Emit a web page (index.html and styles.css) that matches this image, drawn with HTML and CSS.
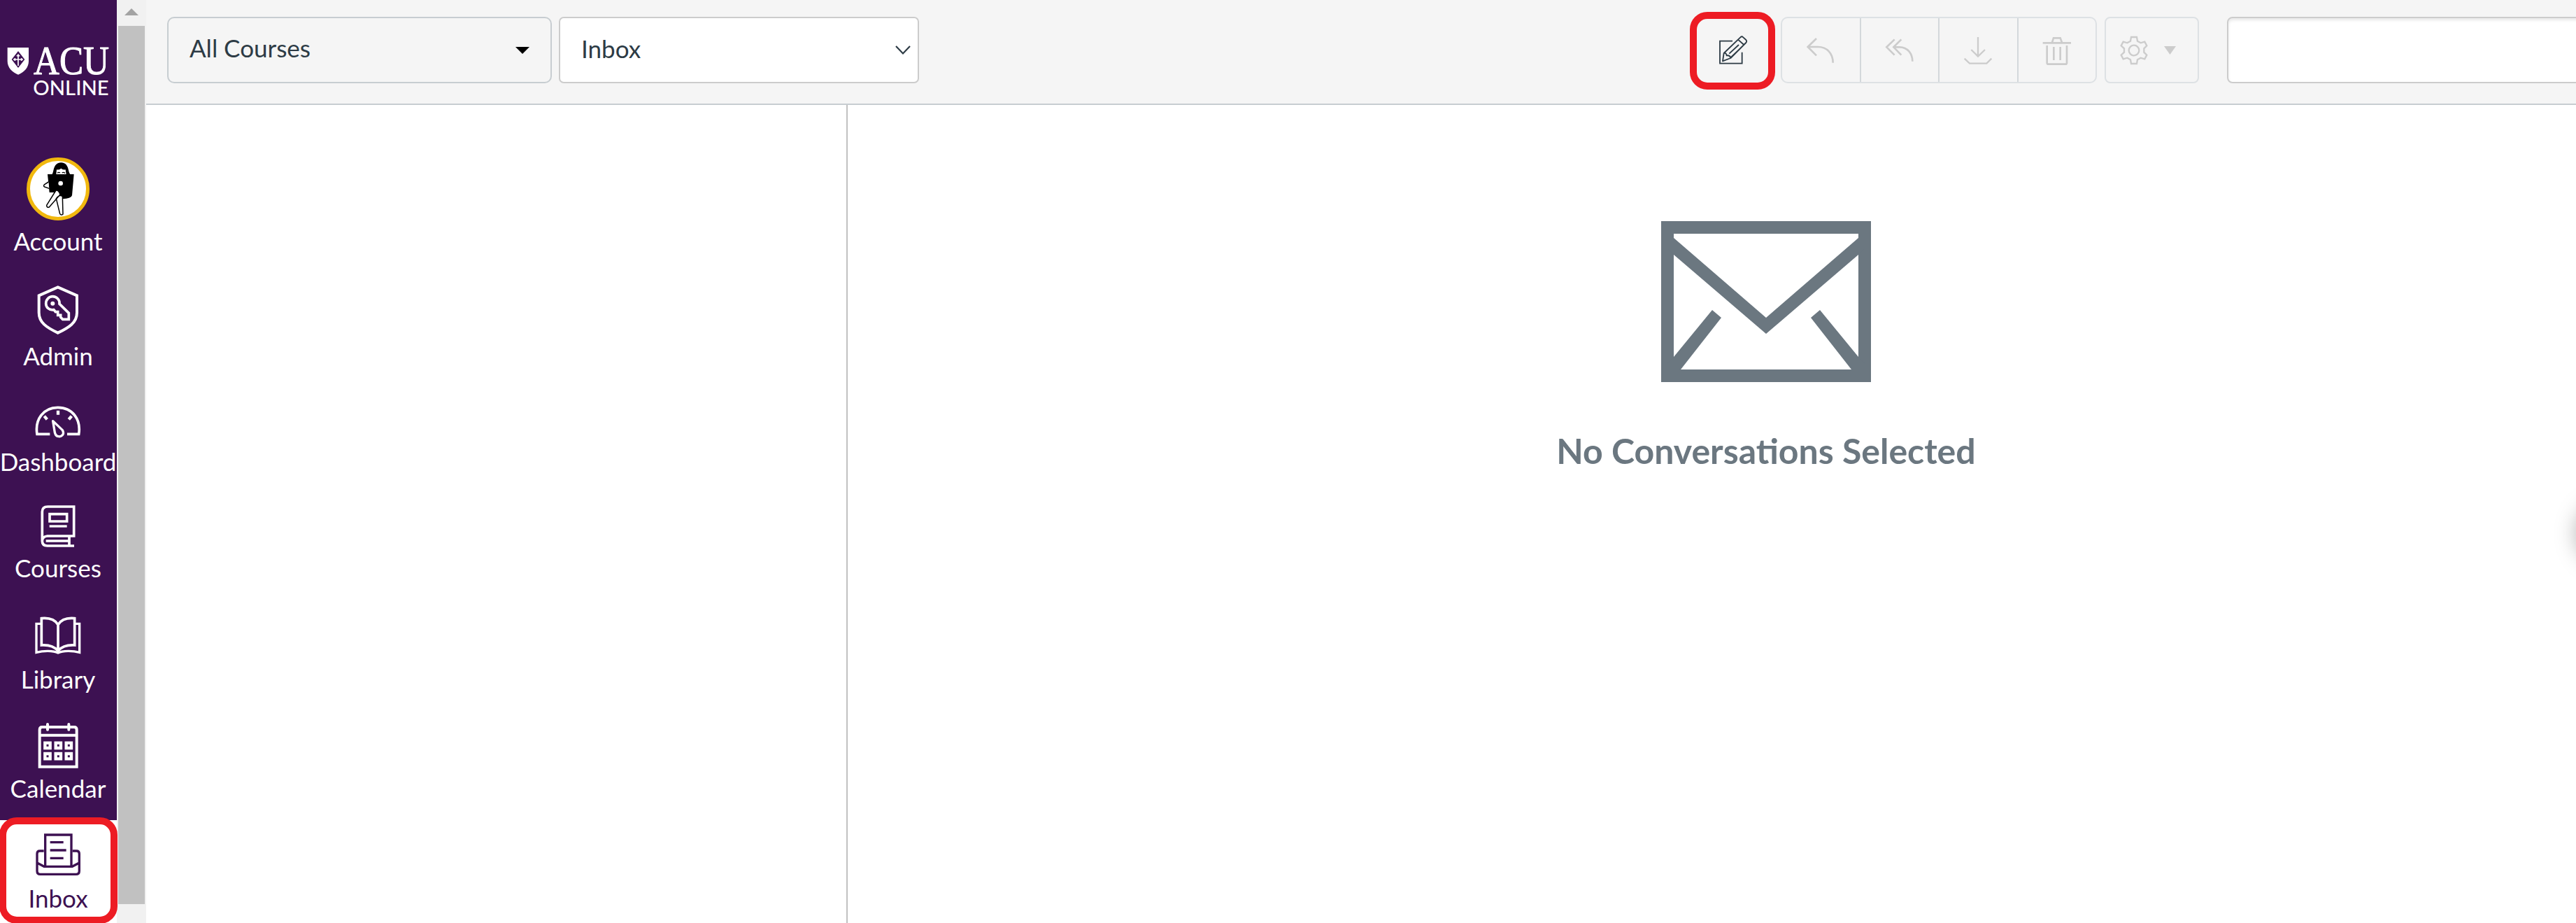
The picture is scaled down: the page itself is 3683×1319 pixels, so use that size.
FILE: index.html
```html
<!DOCTYPE html>
<html lang="en">
<head>
<meta charset="utf-8">
<title>Inbox</title>
<link rel="stylesheet" href="styles.css">
</head>
<body>
<div class="app">
  <nav class="sidebar">
    <div class="logo">
      <svg width="167" height="160" viewBox="0 0 501 480">
        <path fill="#fff" d="M32 204H123V262C123 290 103 311 78 320C52 311 32 290 32 262Z"/>
        <path fill="#3d1152" d="M78 219L106 255L78 291L50 255Z"/>
        <path stroke="#fff" stroke-width="5" fill="none" d="M78 232V282M57 255H99"/>
        <path stroke="#fff" stroke-width="5" fill="none" d="M71 239H85M64 249V261M92 249V261"/>
        <text class="logo-name" x="144" y="317" textLength="324" lengthAdjust="spacingAndGlyphs">ACU</text>
        <text class="logo-sub" x="142" y="409" textLength="325" lengthAdjust="spacingAndGlyphs">ONLINE</text>
      </svg>
    </div>
    <a class="item account">
      <svg width="90" height="90" viewBox="114 675 270 270">
        <circle cx="249" cy="810" r="127.500" fill="#fff" stroke="#f1b80e" stroke-width="15"/>
        <path d="M223 748C232 740 226 698 262 697C298 698 290 738 302 748Z"/>
        <path fill="#fff" d="M241 748L243 727Q252 730 262 722Q272 730 281 727L284 748Z"/>
        <path fill="none" stroke="#000" stroke-width="4" d="M246 742Q252 737 258 741M266 741Q272 737 279 742"/>
        <path d="M204 747H317L309 838Q305 851 268 853L245 825H212Z"/>
        <circle cx="260" cy="786" r="10" fill="#fff"/>
        <path fill="#fff" stroke="#000" stroke-width="4.500" stroke-linejoin="round" d="M208 780L191 791Q184 797 191 801L211 808M240 816L200 880Q200 891 211 888L258 834Q252 814 240 816ZM241 851L257 917Q263 925 270 918L268 842Q255 832 241 851Z"/>
      </svg>
      <span>Account</span>
    </a>
    <a class="item admin">
      <svg width="60" height="70" viewBox="161 84 180 210" fill="none" stroke="#fff" stroke-width="12">
        <path d="M250 91L332 127V200C332 243 298 264 250 287C202 264 169 243 169 200V127Z"/>
        <path stroke-width="11" d="M257 163C259 146 246 131 228 131C211 131 199 145 199 161C199 178 213 191 233 188L240 197H250V211H262V220L271 229H297V202Z"/>
        <circle cx="228" cy="161" r="9" fill="#fff" stroke="none"/>
      </svg>
      <span>Admin</span>
    </a>
    <a class="item dashboard">
      <svg width="66" height="46" viewBox="152 598 198 138" fill="none" stroke="#fff" stroke-width="11">
        <path d="M216 719H161C151 657 187 605 250 605C314 605 350 657 340 719H290"/>
        <path d="M229 663L270 702C281 722 263 731 254 729C243 729 239 720 237 712Z" stroke-linejoin="round" stroke-width="10"/>
        <path stroke-width="13" d="M251 618V636M192 642L204 656M309 642L297 656"/>
      </svg>
      <span>Dashboard</span>
    </a>
    <a class="item courses">
      <svg width="50" height="60" viewBox="175 96 150 180" fill="none" stroke="#fff" stroke-width="11">
        <path d="M182 250V124Q182 102 206 102H318V228H204Q182 230 182 250Q182 270 204 270H319M298 228V270M198 249H298"/>
        <path d="M214 134H288V165H214Z"/>
        <path stroke-width="10" d="M213 186H288"/>
      </svg>
      <span>Courses</span>
    </a>
    <a class="item library">
      <svg width="66" height="54" viewBox="152 571 198 162" fill="none" stroke="#fff" stroke-width="11">
        <path d="M251 606C236 582 210 576 180 579V694C210 692 235 700 251 718C267 700 292 692 322 694V579C292 576 266 582 251 606V718"/>
        <path stroke-width="10" d="M180 602H158V725C190 717 230 717 251 727C272 717 312 717 343 725V602H322"/>
      </svg>
      <span>Library</span>
    </a>
    <a class="item calendar">
      <svg width="58" height="65" viewBox="163 99 174 195" fill="none" stroke="#fff" stroke-width="12">
        <path d="M171 287V128Q171 117 182 117H319Q330 117 330 128V287ZM171 152H330"/>
        <path stroke-linecap="round" d="M205 105V128M296 105V128"/>
        <path stroke-width="13" d="M194 185H216V207H194ZM240 185H262V207H240ZM285 185H307V207H285ZM194 231H216V253H194ZM240 231H262V253H240ZM285 231H307V253H285Z"/>
      </svg>
      <span>Calendar</span>
    </a>
    <a class="item inbox">
      <svg width="64" height="61" viewBox="154 573 192 183" fill="none" stroke="#3d1152" stroke-width="10">
        <path d="M189 648H172Q160 648 160 660V734Q160 748 174 748H327Q341 748 341 734V660Q341 648 329 648H312M160 699L190 715H311L341 699"/>
        <path d="M195 715V579H307V715"/>
        <path d="M216 611H273M216 645H285M216 679H273"/>
      </svg>
      <span>Inbox</span>
      <i class="ring ring-inbox"></i>
    </a>
  </nav>
  <div class="scrollbar">
    <svg width="20" height="10" viewBox="0 0 20 10"><path d="M0 10L10 0L20 10Z" fill="#a3a3a3"/></svg>
    <div class="thumb"></div>
  </div>
  <main class="main">
    <header class="toolbar">
      <div class="picker all-courses"><span>All Courses</span>
        <svg width="20" height="10" viewBox="0 0 20 10"><path d="M0 0H20L10 10Z"/></svg>
      </div>
      <div class="picker mailbox"><span>Inbox</span>
        <svg width="22" height="14" viewBox="0 0 22 14"><path d="M1 1L11 11.500L21 1" fill="none" stroke="#2d3b45" stroke-width="2.200"/></svg>
      </div>
      <div class="compose">
        <svg width="42" height="42" viewBox="202 151 126 126" fill="none" stroke="#2d3b45" stroke-width="5.500">
          <path d="M262 174H208V270H303V222"/>
          <path d="M220 260L225 226L296 158Q302 152 308 158L320 169Q325 175 320 181L254 247ZM225 226Q236 224 237 236Q252 234 254 247M286 168L311 190M248 228L289 190M252 247L301 200" stroke-linejoin="round"/>
        </svg>
        <i class="ring ring-compose"></i>
      </div>
      <div class="group">
        <div class="action">
          <svg width="42" height="38" viewBox="578 160 126 114" fill="none" stroke="#ccc" stroke-width="8">
            <path d="M623 166L586 202L623 239M586 202H630C668 202 694 230 694 270"/>
          </svg>
        </div>
        <div class="action">
          <svg width="42" height="34" viewBox="916 169 126 102" fill="none" stroke="#ccc" stroke-width="8">
            <path d="M957 173L923 206L957 240M986 173L953 206L986 240M953 206H979C1013 206 1034 234 1034 267"/>
          </svg>
        </div>
        <div class="action">
          <svg class="low" width="42" height="42" viewBox="52 157 126 126" fill="none" stroke="#ccc" stroke-width="7">
            <path d="M115 160V244M86 214L115 243L145 214M57 252L79 273H152L173 252"/>
          </svg>
        </div>
        <div class="action">
          <svg class="low" width="42" height="42" viewBox="390 156 126 126" fill="none" stroke="#ccc" stroke-width="8">
            <path d="M392 184H513M432 182L438 163H467L474 182M410 195V269Q410 275 416 275H489Q495 275 495 269V195M439 201V258M467 201V258"/>
          </svg>
        </div>
      </div>
      <div class="settings">
        <svg width="42" height="42" viewBox="719 150 126 126" fill="none" stroke="#ccc" stroke-width="7">
          <path d="M770 156H794L797 173L811 181L828 176L837 193L825 205V221L837 233L828 250L811 245L797 253L794 270H770L767 253L753 245L736 250L727 233L740 221V205L727 193L736 176L753 181L767 173Z"/>
          <circle cx="782" cy="213" r="22"/>
        </svg>
        <svg width="17" height="12" viewBox="0 0 17 12"><path d="M0 0H17L8.500 12Z" fill="#ccc"/></svg>
      </div>
      <div class="search"></div>
    </header>
    <div class="panes">
      <section class="list"></section>
      <section class="detail">
        <svg width="300" height="230" viewBox="0 0 300 230" fill="#6b7780">
          <path fill-rule="evenodd" d="M0 0H300V230H0ZM18 18V212H282V18Z"/>
          <path d="M10 16H18V24L150 138L282 24V16H290V40L282 48L150 161L18 48L10 40Z"/>
          <path d="M73 127L86 138L28 212V222H8V205L18 194ZM227 127L214 138L272 212V222H292V205L282 194Z"/>
        </svg>
        <h2>No Conversations Selected</h2>
      </section>
    </div>
  </main>
</div>
<div class="float-button"></div>
</body>
</html>
```
FILE: styles.css
```css
* { box-sizing: border-box; }
html, body { margin: 0; height: 1319px; overflow: hidden; }
body {
  position: relative;
  width: 3683px;
  background: #fff;
  color: #2d3b45;
  font-family: Lato, sans-serif;
  font-size: 35px;
}
svg { display: block; flex: none; }
.app { display: flex; height: 1319px; }

.sidebar { flex: none; width: 167px; background: #3d1152; color: #fff; }
.logo { height: 225px; }
.logo-name { font: 172px "Liberation Serif", serif; fill: #fff; stroke: #fff; stroke-width: 3px; }
.logo-sub { font: 500 85px Lato, sans-serif; fill: #fff; }
.item { display: flex; flex-direction: column; align-items: center; padding-right: 1px; }
.item span { line-height: 44px; height: 44px; white-space: nowrap; }
.account { gap: 7px; }
.admin { padding-top: 42px; gap: 8px; }
.dashboard { padding-top: 50px; gap: 11px; }
.courses { padding-top: 41px; gap: 7px; }
.library { padding-top: 48px; gap: 13px; }
.calendar { padding-top: 41px; gap: 6px; }
.inbox {
  position: relative;
  height: 147px;
  margin-top: 24px;
  padding-top: 19px;
  gap: 9px;
  background: #fff;
  color: #3d1152;
}

.ring { position: absolute; z-index: 2; border: 10px solid #ed1c24; border-radius: 25px; }
.ring-inbox { left: -1px; top: -4px; width: 169px; height: 152px; }
.ring-compose { left: -6px; top: -7px; width: 122px; height: 111px; }

.scrollbar {
  flex: none;
  display: flex;
  flex-direction: column;
  align-items: center;
  gap: 15px;
  width: 42px;
  padding: 12px 0 27px;
  background: #f1f1f1;
}
.thumb { flex: 1; width: 38px; background: #c1c1c1; }

.main { flex: none; width: 3630px; }
.toolbar {
  display: flex;
  height: 150px;
  padding: 24px 0 0 30px;
  background: #f5f5f5;
  border-bottom: 2px solid #c7cdd1;
}
.toolbar > div { flex: none; height: 95px; }
.picker {
  display: flex;
  align-items: center;
  justify-content: space-between;
  border: 2px solid #c7cdd1;
  border-radius: 10px;
}
.picker span { line-height: 44px; }
.all-courses { width: 550px; padding: 0 30px 7px 30px; }
.all-courses svg { margin-top: 7px; }
.mailbox { width: 515px; margin-left: 10px; padding: 0 10px 5px 30px; background: #fff; border-color: #ccc; border-radius: 7px; }
.mailbox svg { margin-top: 5px; }
.compose {
  position: relative;
  display: flex;
  align-items: center;
  justify-content: center;
  width: 110px;
  margin-left: 1108px;
  padding-left: 2px;
}
.group { display: flex; width: 452px; margin-left: 14px; border: 2px solid #dde1e4; border-radius: 10px; }
.action { flex: 1; display: flex; align-items: center; justify-content: center; }
.action + .action { border-left: 2px solid #d3d8db; }
.low { margin-top: 2px; }
.settings {
  display: flex;
  align-items: center;
  gap: 22px;
  width: 135px;
  margin-left: 11px;
  padding-left: 19px;
  border: 2px solid #dde1e4;
  border-radius: 8px;
}
.search {
  width: 600px;
  margin-left: 40px;
  background: #fff;
  border: 2px solid #ccc;
  border-radius: 8px;
  box-shadow: inset 0 3px 4px rgba(0, 0, 0, .09);
}

.panes { display: flex; height: 1169px; }
.list { width: 1003px; border-right: 2px solid #c1c1c1; }
.detail { display: flex; flex-direction: column; align-items: center; width: 2627px; padding: 166px 1px 0 0; }
.detail h2 { margin: 68px 0 0; font-size: 50px; line-height: 60px; font-weight: 700; color: #6b7780; }

.float-button {
  position: absolute;
  left: 3685px;
  top: 716px;
  width: 88px;
  height: 88px;
  border-radius: 50%;
  box-shadow: 0 2px 32px rgba(0, 0, 0, .34);
}
```
